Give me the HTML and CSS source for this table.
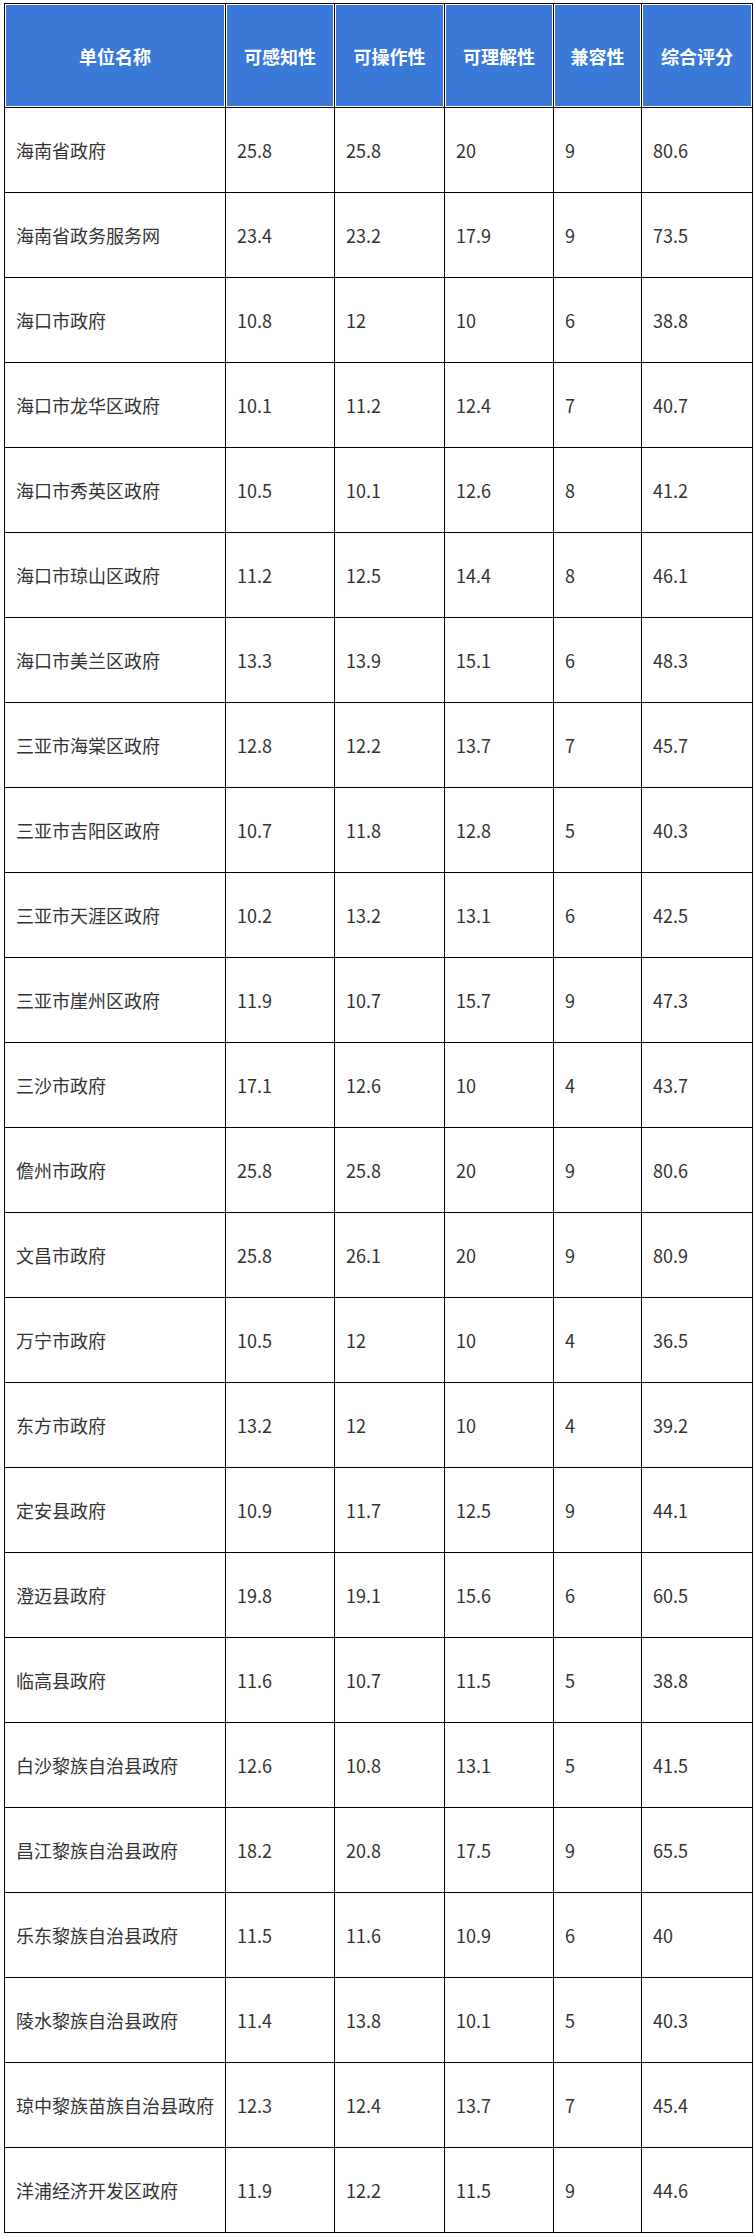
FILE: index.html
```html
<!DOCTYPE html>
<html lang="zh-CN">
<head>
<meta charset="utf-8">
<title>评分表</title>
<link rel="stylesheet" href="styles.css">
</head>
<body>
<table class="score">
<colgroup>
<col class="c-name"><col class="c-num"><col class="c-num2"><col class="c-num"><col class="c-small"><col class="c-total">
</colgroup>
<thead>
<tr><th>单位名称</th><th>可感知性</th><th>可操作性</th><th>可理解性</th><th>兼容性</th><th>综合评分</th></tr>
</thead>
<tbody>
<tr><td>海南省政府</td><td>25.8</td><td>25.8</td><td>20</td><td>9</td><td>80.6</td></tr>
<tr><td>海南省政务服务网</td><td>23.4</td><td>23.2</td><td>17.9</td><td>9</td><td>73.5</td></tr>
<tr><td>海口市政府</td><td>10.8</td><td>12</td><td>10</td><td>6</td><td>38.8</td></tr>
<tr><td>海口市龙华区政府</td><td>10.1</td><td>11.2</td><td>12.4</td><td>7</td><td>40.7</td></tr>
<tr><td>海口市秀英区政府</td><td>10.5</td><td>10.1</td><td>12.6</td><td>8</td><td>41.2</td></tr>
<tr><td>海口市琼山区政府</td><td>11.2</td><td>12.5</td><td>14.4</td><td>8</td><td>46.1</td></tr>
<tr><td>海口市美兰区政府</td><td>13.3</td><td>13.9</td><td>15.1</td><td>6</td><td>48.3</td></tr>
<tr><td>三亚市海棠区政府</td><td>12.8</td><td>12.2</td><td>13.7</td><td>7</td><td>45.7</td></tr>
<tr><td>三亚市吉阳区政府</td><td>10.7</td><td>11.8</td><td>12.8</td><td>5</td><td>40.3</td></tr>
<tr><td>三亚市天涯区政府</td><td>10.2</td><td>13.2</td><td>13.1</td><td>6</td><td>42.5</td></tr>
<tr><td>三亚市崖州区政府</td><td>11.9</td><td>10.7</td><td>15.7</td><td>9</td><td>47.3</td></tr>
<tr><td>三沙市政府</td><td>17.1</td><td>12.6</td><td>10</td><td>4</td><td>43.7</td></tr>
<tr><td>儋州市政府</td><td>25.8</td><td>25.8</td><td>20</td><td>9</td><td>80.6</td></tr>
<tr><td>文昌市政府</td><td>25.8</td><td>26.1</td><td>20</td><td>9</td><td>80.9</td></tr>
<tr><td>万宁市政府</td><td>10.5</td><td>12</td><td>10</td><td>4</td><td>36.5</td></tr>
<tr><td>东方市政府</td><td>13.2</td><td>12</td><td>10</td><td>4</td><td>39.2</td></tr>
<tr><td>定安县政府</td><td>10.9</td><td>11.7</td><td>12.5</td><td>9</td><td>44.1</td></tr>
<tr><td>澄迈县政府</td><td>19.8</td><td>19.1</td><td>15.6</td><td>6</td><td>60.5</td></tr>
<tr><td>临高县政府</td><td>11.6</td><td>10.7</td><td>11.5</td><td>5</td><td>38.8</td></tr>
<tr><td>白沙黎族自治县政府</td><td>12.6</td><td>10.8</td><td>13.1</td><td>5</td><td>41.5</td></tr>
<tr><td>昌江黎族自治县政府</td><td>18.2</td><td>20.8</td><td>17.5</td><td>9</td><td>65.5</td></tr>
<tr><td>乐东黎族自治县政府</td><td>11.5</td><td>11.6</td><td>10.9</td><td>6</td><td>40</td></tr>
<tr><td>陵水黎族自治县政府</td><td>11.4</td><td>13.8</td><td>10.1</td><td>5</td><td>40.3</td></tr>
<tr><td>琼中黎族苗族自治县政府</td><td>12.3</td><td>12.4</td><td>13.7</td><td>7</td><td>45.4</td></tr>
<tr><td>洋浦经济开发区政府</td><td>11.9</td><td>12.2</td><td>11.5</td><td>9</td><td>44.6</td></tr>
</tbody>
</table>
</body>
</html>
```

FILE: styles.css
```css
html, body {
  margin: 0;
  padding: 0;
  background: #fff;
}
body {
  padding: 3px 0 0 4px;
  font-family: "Noto Sans CJK SC", "Noto Sans", sans-serif;
}
.score {
  border-collapse: collapse;
  table-layout: fixed;
  width: 748px;
}
.c-name { width: 221px; }
.c-num { width: 109px; }
.c-num2 { width: 110px; }
.c-small { width: 88px; }
.c-total { width: 111px; }
.score th,
.score td {
  border: 1px solid #000;
  box-shadow: inset 0 0 0 1px #fff;
  padding: 0 8px 0 11px;
  white-space: nowrap;
}
.score thead tr { height: 104px; }
.score tbody tr { height: 85px; }
.score th {
  background: #3a79d8;
  color: #fff;
  font-size: 18px;
  font-weight: 700;
  text-align: center;
  padding: 0 4px;
}
.score td {
  color: #333;
  font-size: 18px;
  text-align: left;
}
```
